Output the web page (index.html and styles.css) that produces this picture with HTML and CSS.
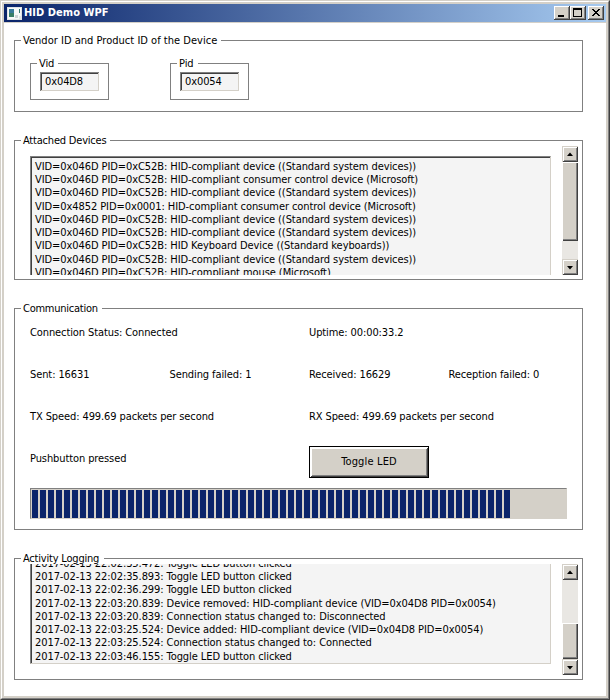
FILE: index.html
```
<!DOCTYPE html>
<html lang="en">
<head>
<meta charset="utf-8">
<title>HID Demo WPF</title>
<link rel="stylesheet" href="styles.css">
</head>
<body>
<div class="window">
  <div class="frame">
    <header class="titlebar">
      <svg class="app-icon" width="15" height="13" viewBox="0 0 15 13" shape-rendering="crispEdges">
        <rect width="15" height="13" fill="#dfe3e5"/>
        <rect x="1" y="1" width="13" height="11" fill="#f7f9f9"/>
        <rect x="2" y="2" width="5" height="8" fill="#397b9b"/>
        <rect x="2" y="6" width="5" height="4" fill="#397f67"/>
        <rect x="8" y="8" width="3" height="3" fill="#cfd5d7"/>
        <rect x="12" y="2" width="1" height="4" fill="#397b70"/>
        <rect x="12" y="9" width="2" height="3" fill="#e2e5e6"/>
      </svg>
      <h1 class="title">HID Demo WPF</h1>
      <div class="controls">
        <button class="ctl" aria-label="Minimize"><svg width="16" height="14" viewBox="0 0 16 14" shape-rendering="crispEdges"><rect x="4" y="9" width="6" height="2"/></svg></button>
        <button class="ctl" aria-label="Maximize"><svg width="16" height="14" viewBox="0 0 16 14" shape-rendering="crispEdges"><path d="M3 2h9v9h-9zM4 4v6h7v-6z" fill-rule="evenodd"/></svg></button>
        <button class="ctl close" aria-label="Close"><svg width="16" height="14" viewBox="0 0 16 14" shape-rendering="crispEdges"><path d="M4 3h2v1h1v1h2v-1h1v-1h2v1h-1v1h-1v1h-1v1h1v1h1v1h1v1h-2v-1h-1v-1h-2v1h-1v1h-2v-1h1v-1h1v-1h1v-1h-1v-1h-1v-1h-1z"/></svg></button>
      </div>
    </header>
    <main class="content">
      <section class="group ids">
        <h2 class="legend l-ids">Vendor ID and Product ID of the Device</h2>
        <div class="id-row">
          <div class="group small"><h3 class="legend l-vid">Vid</h3><div class="field">0x04D8</div></div>
          <div class="group small"><h3 class="legend l-pid">Pid</h3><div class="field">0x0054</div></div>
        </div>
      </section>

      <section class="group devices">
        <h2 class="legend l-dev">Attached Devices</h2>
        <div class="scroll-area">
          <div class="view"><div class="list dev-list">
            <p>VID=0x046D PID=0xC52B: HID-compliant device ((Standard system devices))</p>
            <p>VID=0x046D PID=0xC52B: HID-compliant consumer control device (Microsoft)</p>
            <p>VID=0x046D PID=0xC52B: HID-compliant device ((Standard system devices))</p>
            <p>VID=0x4852 PID=0x0001: HID-compliant consumer control device (Microsoft)</p>
            <p>VID=0x046D PID=0xC52B: HID-compliant device ((Standard system devices))</p>
            <p>VID=0x046D PID=0xC52B: HID-compliant device ((Standard system devices))</p>
            <p>VID=0x046D PID=0xC52B: HID Keyboard Device ((Standard keyboards))</p>
            <p>VID=0x046D PID=0xC52B: HID-compliant device ((Standard system devices))</p>
            <p>VID=0x046D PID=0xC52B: HID-compliant mouse (Microsoft)</p>
          </div></div>
          <div class="scrollbar">
            <div class="sb-btn"><svg width="12" height="12" viewBox="0 0 12 12"><path d="M3 8L6 4.6L9 8z"/></svg></div>
            <div class="thumb thumb-dev"></div>
            <div class="track"></div>
            <div class="sb-btn"><svg width="12" height="12" viewBox="0 0 12 12"><path d="M3 5L6 8.4L9 5z"/></svg></div>
          </div>
        </div>
      </section>

      <section class="group comm">
        <h2 class="legend l-comm">Communication</h2>
        <div class="stats">
          <span class="wide">Connection Status: Connected</span>
          <span class="wide">Uptime: 00:00:33.2</span>
          <span>Sent: 16631</span>
          <span>Sending failed: 1</span>
          <span>Received: 16629</span>
          <span>Reception failed: 0</span>
          <span class="wide">TX Speed: 499.69 packets per second</span>
          <span class="wide">RX Speed: 499.69 packets per second</span>
          <span class="wide">Pushbutton pressed</span>
          <div class="wide btn-cell"><button class="toggle"><span class="face">Toggle LED</span></button></div>
        </div>
        <div class="progress"><div class="bar"></div></div>
      </section>

      <section class="group log">
        <h2 class="legend l-log">Activity Logging</h2>
        <div class="scroll-area">
          <div class="view log-view"><div class="list log-list">
            <p>2017-02-13 22:02:35.472: Toggle LED button clicked</p>
            <p>2017-02-13 22:02:35.893: Toggle LED button clicked</p>
            <p>2017-02-13 22:02:36.299: Toggle LED button clicked</p>
            <p>2017-02-13 22:03:20.839: Device removed: HID-compliant device (VID=0x04D8 PID=0x0054)</p>
            <p>2017-02-13 22:03:20.839: Connection status changed to: Disconnected</p>
            <p>2017-02-13 22:03:25.524: Device added: HID-compliant device (VID=0x04D8 PID=0x0054)</p>
            <p>2017-02-13 22:03:25.524: Connection status changed to: Connected</p>
            <p>2017-02-13 22:03:46.155: Toggle LED button clicked</p>
          </div></div>
          <div class="scrollbar">
            <div class="sb-btn"><svg width="12" height="12" viewBox="0 0 12 12"><path d="M3 8L6 4.6L9 8z"/></svg></div>
            <div class="track"></div>
            <div class="thumb thumb-log"></div>
            <div class="sb-btn"><svg width="12" height="12" viewBox="0 0 12 12"><path d="M3 5L6 8.4L9 5z"/></svg></div>
          </div>
        </div>
      </section>
    </main>
  </div>
</div>
</body>
</html>
```
FILE: styles.css
```
* { box-sizing: border-box; margin: 0; padding: 0; }
body {
  width: 610px;
  height: 700px;
  overflow: hidden;
  font: 11px/14px Tahoma, "DejaVu Sans Condensed", "DejaVu Sans", sans-serif;
  letter-spacing: -0.1px;
  color: #000;
  background: #fff;
}
button { font: inherit; letter-spacing: inherit; color: inherit; border-radius: 0; }
.window {
  width: 610px;
  height: 700px;
  border: 1px solid;
  border-color: #d4d0c8 #404040 #404040 #d4d0c8;
}
.frame {
  height: 698px;
  border: 1px solid;
  border-color: #fff #808080 #808080 #fff;
  padding: 2px;
  background: #d4d0c8;
}
.titlebar {
  display: flex;
  align-items: center;
  height: 18px;
  padding: 0 2px 0 3px;
  background: linear-gradient(90deg, #0a246a, #a6caf0);
}
.app-icon { display: block; flex: none; }
.title { flex: 1; margin-left: 2px; font-size: 11px; line-height: 18px; letter-spacing: 0.05px; color: #fff; }
.controls { display: flex; }
.ctl {
  width: 16px;
  height: 14px;
  border: 0;
  background: #d4d0c8;
  box-shadow: inset -1px -1px #404040, inset 1px 1px #fff, inset -2px -2px #808080;
}
.ctl svg { display: block; }
.ctl.close { margin-left: 2px; }
.content { height: 673px; margin-top: 1px; padding: 17px 23px 0 10px; background: #fff; }
.group { border: 1px solid #808080; }
.legend {
  height: 14px;
  margin: -7px 0 0 6px;
  padding-left: 2px;
  background: #fff;
  font-size: 11px;
  font-weight: normal;
  line-height: 14px;
  white-space: nowrap;
}
.l-ids { width: 200px; letter-spacing: 0.02px; }
.l-vid { width: 21px; }
.l-pid { width: 21px; }
.l-dev { width: 89px; letter-spacing: -0.2px; }
.l-comm { width: 81px; letter-spacing: -0.25px; }
.l-log { width: 83px; letter-spacing: -0.2px; }
.ids { height: 72px; }
.id-row { display: flex; gap: 61px; padding: 15px 0 0 15px; }
.small { width: 79px; height: 37px; }
.field {
  width: 59px;
  height: 19px;
  margin: 1px 0 0 9px;
  padding-left: 5px;
  line-height: 19px;
  background: #f4f4f4;
  box-shadow: inset 1px 1px #808080, inset -1px -1px #d4d0c8, inset 2px 2px #404040;
}
.devices { height: 140px; margin-top: 28px; }
.scroll-area { display: flex; justify-content: space-between; padding: 0 4px 0 15px; }
.devices .scroll-area { margin-top: -2px; }
.view { width: 521px; height: 129px; padding-top: 10px; overflow: hidden; }
.list {
  border: 1px solid;
  border-color: #808080 #d4d0c8 #d4d0c8 #808080;
  background: #f4f4f4;
  padding: 2.8px 4px 0;
  white-space: nowrap;
  line-height: 13.28px;
  letter-spacing: -0.08px;
}
.dev-list { height: 140px; box-shadow: inset 1px 1px #404040; }
.scrollbar { display: flex; flex-direction: column; width: 16px; background: #e9e7e3; }
.sb-btn {
  flex: none;
  width: 16px;
  height: 16px;
  padding: 2px;
  background: #d4d0c8;
  box-shadow: inset 1px 1px #d4d0c8, inset -1px -1px #404040, inset 2px 2px #fff, inset -2px -2px #808080;
}
.sb-btn svg { display: block; }
.thumb { background: #d4d0c8; box-shadow: inset 1px 1px #fff, inset -1px -1px #404040, inset -2px -2px #808080; }
.thumb-dev { height: 79px; }
.thumb-log { height: 36px; }
.track { flex: 1; }
.comm { height: 222px; margin-top: 28px; }
.stats {
  display: grid;
  grid-template-columns: 139.5px 139.5px 139.5px 1fr;
  grid-template-rows: repeat(4, 42px);
  align-items: center;
  margin: -4px 0 0 15px;
  white-space: nowrap;
}
.wide { grid-column: span 2; }
.toggle {
  display: block;
  width: 120px;
  height: 32px;
  margin-top: 6px;
  border: 1px solid #000;
  background: #d4d0c8;
  letter-spacing: 0.15px;
  box-shadow: inset 1px 1px #fff, inset -1px -1px #404040, inset 2px 2px #fff, inset -2px -2px #808080;
}
.progress {
  width: 537px;
  height: 31px;
  margin: 8px 0 0 15px;
  padding: 1px;
  border: 1px solid;
  border-color: #808080 #d4d0c8 #d4d0c8 #808080;
  background: #d4d0c8;
}
.bar { width: 478px; height: 28px; background: repeating-linear-gradient(90deg, #0a246a 0 6px, #d4d0c8 6px 8px); }
.log { height: 122px; margin-top: 28px; }
.log .scroll-area { margin-top: -2px; }
.log-view { height: 100px; padding: 0; display: flex; align-items: flex-end; }
.log-list { flex: none; width: 521px; padding: 1px 4px 0; box-shadow: inset 1px 0 #404040; }
.log .scrollbar { height: 111px; }
```
